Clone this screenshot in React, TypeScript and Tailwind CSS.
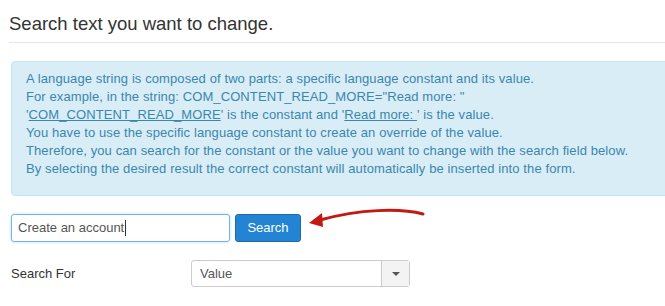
import React from "react";

const font = { fontFamily: '"Liberation Sans", Arial, sans-serif' };

const Arrow = () => (
  <svg width="130" height="30" viewBox="0 0 130 30" className="absolute left-[300px] top-[202px]">
    <path d="M123 12 C100 6 60 7 20 18" fill="none" stroke="#c21a12" strokeWidth="3" strokeLinecap="round" />
    <path d="M9 21 L22 11 L23 25 Z" fill="#c21a12" />
  </svg>
);

const App = () => {
  return (
    <div className="relative w-[665px] h-[306px] overflow-hidden bg-white" style={font}>
      <div className="pl-[9px] pt-[13px]">
        <h2 className="text-[18.5px] leading-[22px] text-[#333] font-normal">Search text you want to change.</h2>
        <div className="mt-[7px] border-b border-[#e5e5e5]" />
      </div>
      <div className="ml-[11px] mt-[18px] w-[680px] rounded-[4px] border border-[#bce8f1] bg-[#d9edf7] pl-[14px] pt-[8px] pb-[17px] text-[13px] leading-[18px] tracking-[0.1px] text-[#3a87ad]">
        <p>A language string is composed of two parts: a specific language constant and its value.</p>
        <p>For example, in the string: COM_CONTENT_READ_MORE="Read more: "</p>
        <p>
          '<span className="underline">COM_CONTENT_READ_MORE</span>' is the constant and '
          <span className="underline">Read more: </span>' is the value.
        </p>
        <p>You have to use the specific language constant to create an override of the value.</p>
        <p>Therefore, you can search for the constant or the value you want to change with the search field below.</p>
        <p>By selecting the desired result the correct constant will automatically be inserted into the form.</p>
      </div>
      <div className="ml-[11px] mt-[18px] flex items-center gap-[5px]">
        <div className="flex h-[28px] w-[219px] items-center rounded-[3px] border border-[#75b3e6] px-[6px] text-[13px] text-[#555] shadow-[0_0_3px_rgba(82,168,236,0.4)]">
          Create an account<span className="ml-px inline-block h-[16px] w-px bg-[#333]" />
        </div>
        <button className="h-[28px] w-[66px] rounded-[3px] border border-[#1d6cb0] bg-[#2384d3] text-[13px] text-white">
          Search
        </button>
      </div>
      <div className="ml-[11px] mt-[18px] flex items-center">
        <span className="w-[180px] text-[13px] text-[#333]">Search For</span>
        <div className="flex h-[27px] w-[219px] rounded-[3px] border border-[#ccc] text-[13px] text-[#555]">
          <span className="flex flex-1 items-center pl-[8px]">Value</span>
          <span className="flex w-[28px] items-center justify-center border-l border-[#ccc] bg-[#f3f3f3]">
            <svg width="8" height="4" viewBox="0 0 8 4"><path d="M0 0 H8 L4 4 Z" fill="#555" /></svg>
          </span>
        </div>
      </div>
      <Arrow />
    </div>
  );
};

export default App;
